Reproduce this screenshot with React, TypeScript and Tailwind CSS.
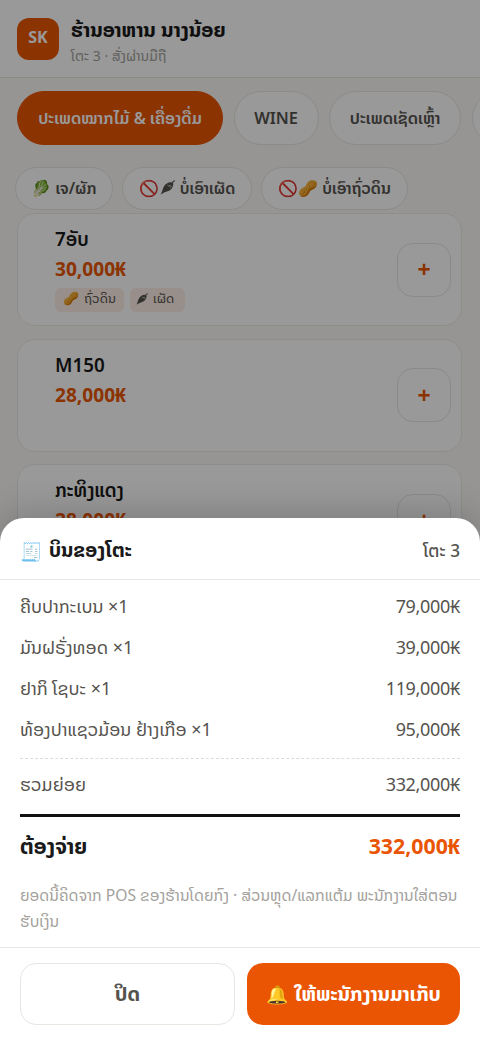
import clsx from 'clsx';
import { FC } from 'react';

const categories = [
  { name: 'ປະເພດໝາກໄມ້ & ເຄື່ອງດື່ມ', width: 'w-[206px]', active: true },
  { name: 'WINE', width: 'w-[85px]' },
  { name: 'ປະເພດເຊັດເຫຼົ້າ', width: 'w-[132px]' },
  { name: '', width: 'w-[90px]' },
];

const filters = [
  { icon: '🥬', name: 'ເຈ/ຜັກ', width: 'w-[98px]' },
  { icon: '🚫', chili: true, name: 'ບໍ່ເອົາເຜັດ', width: 'w-[130px]' },
  { icon: '🚫🥜', name: 'ບໍ່ເອົາຖົ່ວດິນ', width: 'w-[147px]' },
];

const menu = [
  {
    name: '7ອັບ',
    price: '30,000₭',
    tags: [
      { icon: '🥜', name: 'ຖົ່ວດິນ', width: 'w-[69px]' },
      { chili: true, name: 'ເຜັດ', width: 'w-[55px]' },
    ],
  },
  { name: 'M150', price: '28,000₭', tags: [] },
  { name: 'ກະທິງແດງ', price: '28,000₭', tags: [] },
];

const orders = [
  { name: 'ຄີບປາກະເບນ', qty: 1, price: '79,000₭' },
  { name: 'ມັນຝຣັ່ງທອດ', qty: 1, price: '39,000₭' },
  { name: 'ຢາກິ ໂຊບະ', qty: 1, price: '119,000₭' },
  { name: 'ທ້ອງປາແຊວມ້ອນ ຢ້າງເກືອ', qty: 1, price: '95,000₭' },
];

const ChiliIcon: FC<{ className: string }> = ({ className }) => (
  <svg viewBox="0 0 16 16" className={className} aria-hidden="true">
    <path
      fill="currentColor"
      d="M15.6.3c.5.4.3.9-.2 1.3l-1.6 1.2c.7 1.9.1 4.3-1.3 6.2-1.7 2.3-3.9 2.9-5.900 3.500-2.200.7-3.700 1.800-6.200 2.900 1.600-1.900 1.900-3.500 2.500-5.600C3.700 7.200 4.900 5 7.300 3.600c1.700-1 3.700-1.500 5.200-1L14.300.7c.4-.4.9-.7 1.300-.4Z"
    />
    <path fill="none" stroke="#fff" strokeWidth=".5" d="M8.200 4.900 8.900 6.500 11 5.400 10.600 7.600l2.300-.7" />
  </svg>
);

const Header: FC = () => (
  <header className="flex h-[78px] items-center gap-3 border-b border-[#e8e6e1] bg-white px-[17px]">
    <div className="flex h-[42px] w-[42px] items-center justify-center rounded-xl bg-[#ea5504] pb-1 text-base font-bold text-white">
      SK
    </div>
    <div className="pt-[7px] whitespace-nowrap">
      <h1 className="text-[20.1px] leading-[26px] font-bold text-[#1a1a1a]">ຮ້ານອາຫານ ນາງນ້ອຍ</h1>
      <p className="text-sm leading-[25px] text-[#a3a19c]">ໂຕະ 3 · ສັ່ງຜ່ານມືຖື</p>
    </div>
  </header>
);

const MenuCard: FC<(typeof menu)[number]> = ({ name, price, tags }) => (
  <div className="flex h-[113px] shrink-0 items-center justify-between rounded-[18px] border border-[#edebe7] bg-white pr-[10px] pl-[37px]">
    <div className="h-full pt-[10px] whitespace-nowrap">
      <h2 className="text-[18.8px] leading-[30px] font-semibold text-[#1a1a1a]">{name}</h2>
      <p className="mt-px text-[19.1px] leading-[29px] font-bold text-[#ea5504]">{price}</p>
      <div className="mt-1 flex gap-[6px]">
        {tags.map((tag) => (
          <span
            key={tag.name}
            className={clsx(
              'flex h-6 items-center rounded-md bg-[#fdeee6] pb-0.5 text-[13px] text-[#55534e]',
              tag.chili ? 'gap-[5px] pl-1.5' : 'gap-[5px] pl-2',
              tag.width,
            )}
          >
            {tag.icon && <span>{tag.icon}</span>}
            {tag.chili && <ChiliIcon className="h-3 w-3" />}
            {tag.name}
          </span>
        ))}
      </div>
    </div>
    <button
      type="button"
      aria-label="add"
      className="h-[54px] w-[54px] rounded-2xl border border-[#e8e6e1] bg-white text-[23px] font-bold text-[#ea5504]"
    >
      +
    </button>
  </div>
);

const BillSheet: FC = () => (
  <section className="absolute inset-x-0 bottom-0 flex h-[521px] flex-col rounded-t-3xl bg-white text-lg whitespace-nowrap text-[#55534e] shadow-[0_-8px_32px_rgba(0,0,0,0.16)]">
    <div className="flex h-[62px] items-center justify-between border-b border-[#e8e6e1] px-5 pt-1">
      <h2 className="flex items-center gap-[7px] text-[19.8px] font-bold text-[#1a1a1a]">
        <span className="text-lg">🧾</span>
        ບິນຂອງໂຕະ
      </h2>
      <span className="pt-0.5 text-[17.2px] font-medium">ໂຕະ 3</span>
    </div>

    <div className="h-[367px] px-5 pt-[6px]">
      {orders.map((order) => (
        <div key={order.name} className="flex h-[41px] items-center justify-between">
          <span className="text-[17.9px]">
            {order.name} ×{order.qty}
          </span>
          <span className="pb-px tracking-[-0.32px]">{order.price}</span>
        </div>
      ))}
      <div className="mt-[8px] flex h-[51px] items-center justify-between border-t border-dashed border-[#dddbd7]">
        <span>ຮວມຍ່ອຍ</span>
        <span className="pb-px tracking-[-0.32px]">332,000₭</span>
      </div>
      <div className="mt-[5px] flex h-[60px] items-center justify-between border-t-3 border-[#111] text-[21.3px] font-bold">
        <span className="text-[#1a1a1a]">ຕ້ອງຈ່າຍ</span>
        <span className="text-[#ea5504]">332,000₭</span>
      </div>
      <p className="mt-2 text-[15.68px] leading-[26px] text-[#a3a19c]">
        ຍອດນີ້ຄິດຈາກ POS ຂອງຮ້ານໂດຍກົງ · ສ່ວນຫຼຸດ/ແລກແຕ້ມ ພະນັກງານໃສ່ຕອນ
        <br />
        ຮັບເງິນ
      </p>
    </div>

    <div className="flex flex-1 gap-3 border-t border-[#e8e6e1] px-5 pt-[15px] text-[20px] font-bold">
      <button type="button" className="h-[62px] w-[215px] rounded-2xl border border-[#e8e6e1]">
        ປິດ
      </button>
      <button
        type="button"
        className="flex h-[62px] w-[213px] items-center justify-center gap-1.5 rounded-2xl bg-[#ea5504] text-white"
      >
        <span className="text-lg">🔔</span>
        ໃຫ້ພະນັກງານມາເກັບ
      </button>
    </div>
  </section>
);

export default function App() {
  return (
    <div className="relative h-[1039px] w-full overflow-hidden bg-[#faf9f7] font-['Noto_Sans','Noto_Sans_Lao','Noto_Sans_Lao_Looped',sans-serif]">
      <Header />

      <div className="mt-[13px] flex gap-[10.6px] pl-[17px]">
        {categories.map((category) => (
          <button
            key={category.name}
            type="button"
            className={clsx(
              'h-[54px] shrink-0 rounded-full border text-[16.4px] font-semibold whitespace-nowrap',
              category.width,
              category.active
                ? 'border-[#ea5504] bg-[#ea5504] text-white'
                : 'border-[#e8e6e1] bg-white text-[#55534e]',
            )}
          >
            {category.name}
          </button>
        ))}
      </div>

      <div className="mt-[22px] flex gap-[9px] pl-[15px]">
        {filters.map((filter) => (
          <button
            key={filter.name}
            type="button"
            className={clsx(
              'flex h-[43px] shrink-0 items-center justify-center gap-1 rounded-full border border-[#e8e6e1] bg-white pb-0.5 text-base font-semibold whitespace-nowrap text-[#55534e]',
              filter.width,
            )}
          >
            <span className="flex items-center gap-px">
              {filter.icon}
              {filter.chili && <ChiliIcon className="mr-px h-[15px] w-[15px]" />}
            </span>
            {filter.name}
          </button>
        ))}
      </div>

      <main className="mt-[3px] flex flex-col gap-[12.5px] pr-[18px] pl-[17px]">
        {menu.map((item) => (
          <MenuCard key={item.name} {...item} />
        ))}
      </main>

      <div className="absolute inset-0 bg-black/40" />
      <BillSheet />
    </div>
  );
}
